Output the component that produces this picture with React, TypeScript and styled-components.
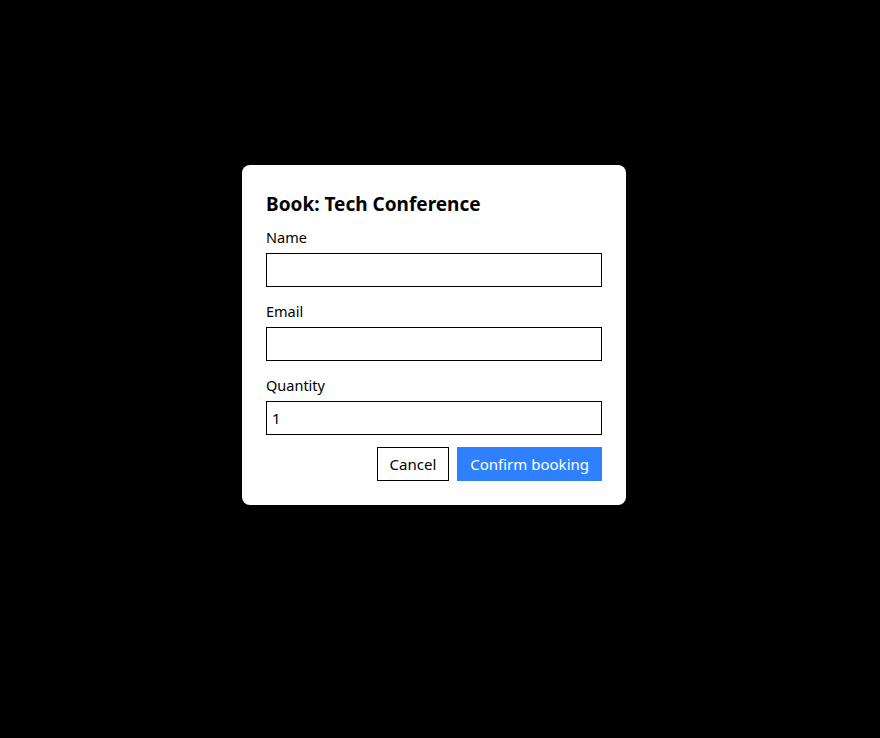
import React from "react";
import styled, { createGlobalStyle } from "styled-components";

const Global = createGlobalStyle`
  html, body { margin: 0; padding: 0; background: #000; }
  body { font-family: "Noto Sans", "Open Sans", sans-serif; }
  * { box-sizing: border-box; }
`;

const Screen = styled.div`
  width: 880px;
  height: 738px;
  background: #000;
  display: flex;
  justify-content: center;
  align-items: flex-start;
  padding-top: 165px;
  padding-right: 12px;
`;

const Dialog = styled.form`
  width: 384px;
  background: #fff;
  border-radius: 8px;
  padding: 24px;
  display: flex;
  flex-direction: column;
`;

const Title = styled.h2`
  margin: 2px 0 10px;
  font-size: 19px;
  line-height: 26px;
  font-weight: 700;
  color: #000;
`;

const Field = styled.label<{ $first?: boolean }>`
  display: flex;
  flex-direction: column;
  gap: 6px;
  margin-top: ${(p) => (p.$first ? "0" : "14px")};
`;

const LabelText = styled.span`
  font-size: 14.5px;
  line-height: 20px;
  color: #000;
`;

const Input = styled.input`
  width: 100%;
  height: 34px;
  border: 1px solid #000;
  border-radius: 0;
  padding: 0 5px;
  font-family: inherit;
  font-size: 15px;
  color: #000;
  background: #fff;
  outline: none;
`;

const Actions = styled.div`
  display: flex;
  justify-content: flex-end;
  gap: 8px;
  margin-top: 12px;
`;

const Button = styled.button<{ $primary?: boolean }>`
  height: 34px;
  padding: 0 12px;
  font-family: inherit;
  font-size: 15px;
  border: 1px solid ${(p) => (p.$primary ? "#2f80ff" : "#000")};
  background: ${(p) => (p.$primary ? "#2f80ff" : "#fff")};
  color: ${(p) => (p.$primary ? "#fff" : "#000")};
  border-radius: 0;
  cursor: pointer;
`;

export default function App() {
  return (
    <>
      <Global />
      <Screen>
        <Dialog onSubmit={(e) => e.preventDefault()}>
          <Title>Book: Tech Conference</Title>
          <Field $first>
            <LabelText>Name</LabelText>
            <Input type="text" />
          </Field>
          <Field>
            <LabelText>Email</LabelText>
            <Input type="email" />
          </Field>
          <Field>
            <LabelText>Quantity</LabelText>
            <Input type="number" defaultValue={1} />
          </Field>
          <Actions>
            <Button type="button">Cancel</Button>
            <Button type="submit" $primary>Confirm booking</Button>
          </Actions>
        </Dialog>
      </Screen>
    </>
  );
}
